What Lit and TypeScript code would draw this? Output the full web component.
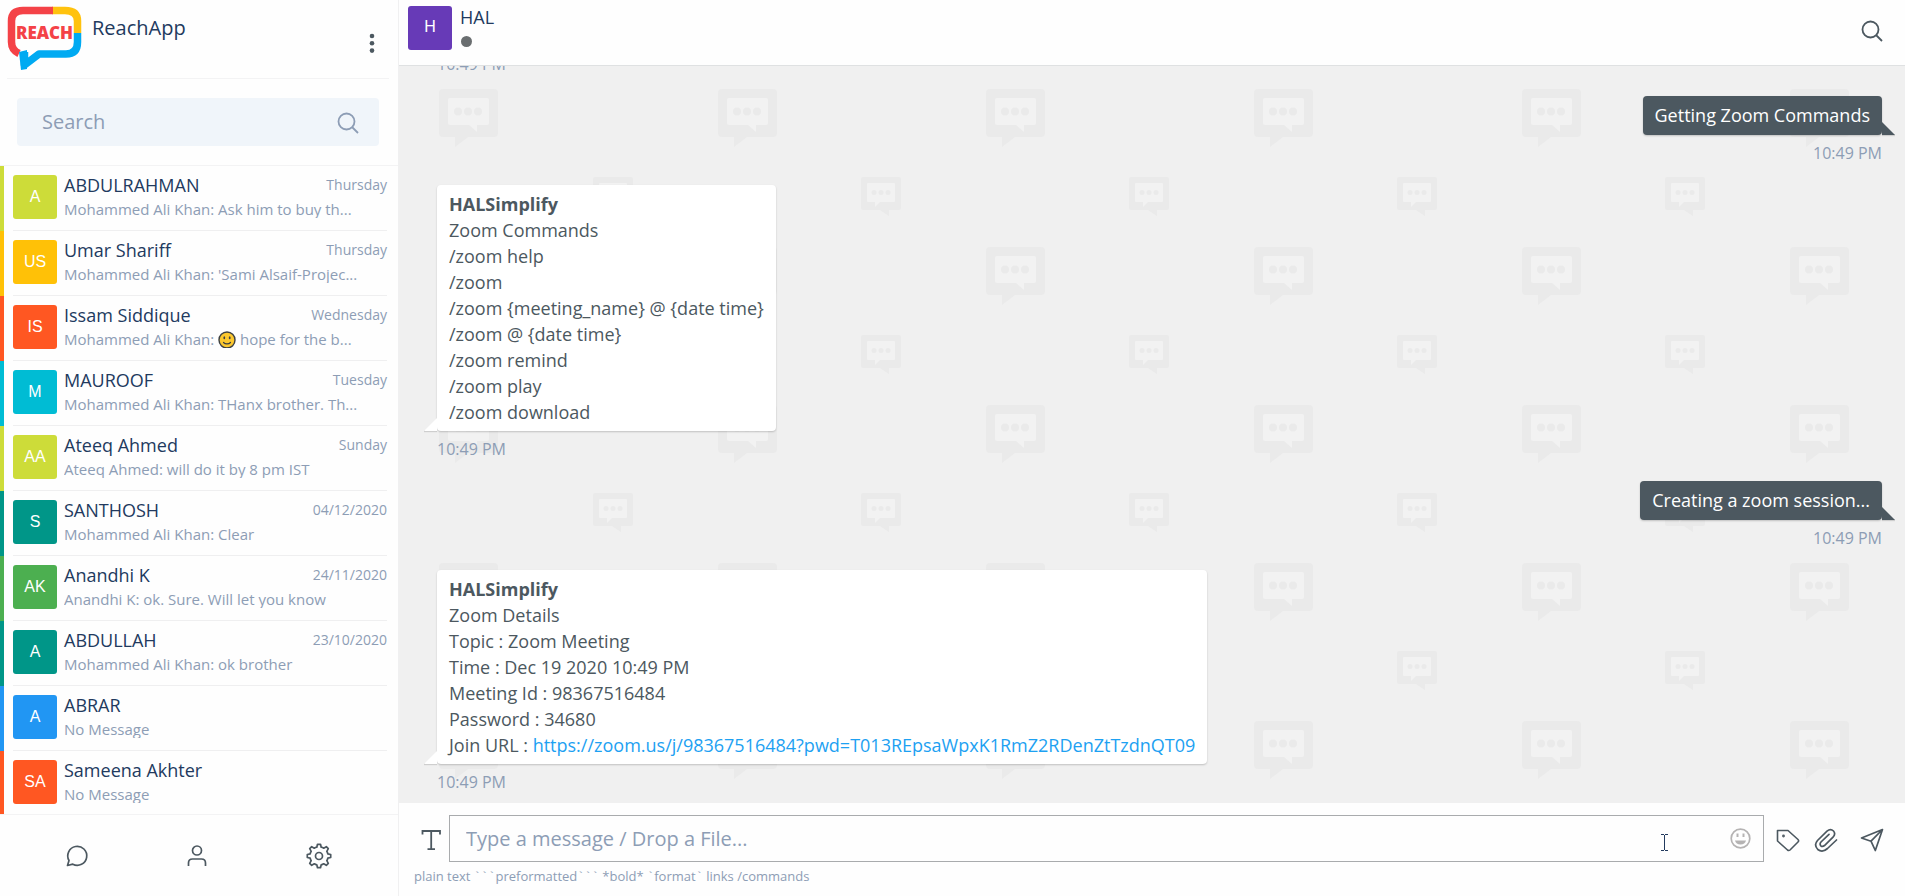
import { LitElement, html, css, svg, nothing, type TemplateResult } from "lit";
import { customElement, property } from "lit/decorators.js";
import { styleMap } from "lit/directives/style-map.js";

interface Chat {
  initials: string;
  name: string;
  when: string;
  color: string;
  text: string;
  emoji?: boolean;
  after?: string;
}

const CHATS: Chat[] = [
  { initials: "A", name: "ABDULRAHMAN", when: "Thursday", color: "#cddc39", text: "Mohammed Ali Khan: Ask him to buy th..." },
  { initials: "US", name: "Umar Shariff", when: "Thursday", color: "#ffc107", text: "Mohammed Ali Khan: 'Sami Alsaif-Projec..." },
  { initials: "IS", name: "Issam Siddique", when: "Wednesday", color: "#ff5722", text: "Mohammed Ali Khan: ", emoji: true, after: " hope for the b..." },
  { initials: "M", name: "MAUROOF", when: "Tuesday", color: "#00bcd4", text: "Mohammed Ali Khan: THanx brother. Th..." },
  { initials: "AA", name: "Ateeq Ahmed", when: "Sunday", color: "#cddc39", text: "Ateeq Ahmed: will do it by 8 pm IST" },
  { initials: "S", name: "SANTHOSH", when: "04/12/2020", color: "#009688", text: "Mohammed Ali Khan: Clear" },
  { initials: "AK", name: "Anandhi K", when: "24/11/2020", color: "#4caf50", text: "Anandhi K: ok. Sure. Will let you know" },
  { initials: "A", name: "ABDULLAH", when: "23/10/2020", color: "#009688", text: "Mohammed Ali Khan: ok brother" },
  { initials: "A", name: "ABRAR", when: "", color: "#2196f3", text: "No Message" },
  { initials: "SA", name: "Sameena Akhter", when: "", color: "#ff5722", text: "No Message" },
];

const smiley = html`<svg class="emoji" viewBox="0 0 18 18" role="img" aria-label="smile">
  <circle cx="9" cy="9" r="8" fill="#fcc82e" stroke="#3c4043" stroke-width="1.4" />
  <ellipse cx="6.3" cy="6.8" rx="0.9" ry="1.5" fill="#3c4043" />
  <ellipse cx="11.7" cy="6.8" rx="0.9" ry="1.5" fill="#3c4043" />
  <path d="M5.500 11.500c1.800 1.800 5.200 1.800 7 0" fill="none" stroke="#3c4043" stroke-width="1.2" stroke-linecap="round" />
</svg>`;

const searchIcon = html`<svg width="22" height="22" viewBox="0 0 22 22" fill="none" stroke="currentColor" stroke-width="1.8" aria-hidden="true">
  <circle cx="9.5" cy="9.5" r="8" />
  <path d="M15 15l6 6" />
</svg>`;

@customElement("chat-row")
class ChatRow extends LitElement {
  @property({ attribute: false }) chat!: Chat;

  static styles = css`
    :host { display: block; }
    .row {
      display: flex;
      align-items: flex-start;
      box-sizing: border-box;
      width: 100%;
      height: 65px;
      padding: 0 11px 0 9px;
      border: 0;
      border-left: 4px solid;
      background: none;
      font-family: "Open Sans", sans-serif;
      text-align: left;
    }
    .inner {
      display: flex;
      flex: 1;
      min-width: 0;
      height: 65px;
      gap: 7px;
      padding-top: 8px;
      box-sizing: border-box;
      border-bottom: 1px solid #efeff0;
    }
    .avatar {
      flex: none;
      width: 44px;
      height: 44px;
      margin-top: 1px;
      border-radius: 3px;
      color: #fff;
      font: 16px/44px "Liberation Sans", Arial, sans-serif;
      text-align: center;
    }
    .body { flex: 1; min-width: 0; }
    .top { display: flex; justify-content: space-between; align-items: center; height: 22px; }
    .name { font-size: 18px; line-height: 22px; font-weight: 500; color: #223a5e; }
    .when { font-size: 14px; line-height: 22px; color: #8d9db5; }
    .text {
      display: block;
      height: 20px;
      margin-top: 2px;
      overflow: hidden;
      font-size: 15px;
      line-height: 22px;
      color: #8d9db5;
      white-space: nowrap;
    }
    .emoji { width: 18px; height: 18px; vertical-align: -4px; }
  `;

  render() {
    const c = this.chat;
    return html`<button class="row" type="button" style=${styleMap({ borderLeftColor: c.color })}>
      <span class="inner">
        <span class="avatar" style=${styleMap({ background: c.color })}>${c.initials}</span>
        <span class="body">
          <span class="top">
            <span class="name">${c.name}</span>
            <span class="when">${c.when}</span>
          </span>
          <span class="text">${c.text}${c.emoji ? smiley : nothing}${c.after ?? nothing}</span>
        </span>
      </span>
    </button>`;
  }
}

@customElement("chat-message")
class ChatMessage extends LitElement {
  @property({ type: Boolean, reflect: true }) own = false;
  @property() time = "";

  static styles = css`
    :host {
      display: flex;
      flex-direction: column;
      align-items: flex-start;
      flex: none;
      font-size: 18px;
      line-height: 26px;
    }
    :host([own]) { align-items: flex-end; }
    .bubble {
      position: relative;
      padding: 6px 12px;
      border-radius: 4px;
      background: #fff;
      color: #4c5860;
      box-shadow: 0 1px 2px rgba(0, 0, 0, 0.2);
    }
    .bubble::after {
      content: "";
      position: absolute;
      bottom: 0;
      right: 100%;
      width: 13px;
      height: 13px;
      background: #fff;
      box-shadow: 0 1px 1px rgba(0, 0, 0, 0.14);
      clip-path: polygon(100% 0, 0 100%, 0 120%, 100% 120%);
    }
    :host([own]) .bubble { padding-bottom: 7px; background: #4c5860; color: #fff; }
    :host([own]) .bubble::after {
      right: auto;
      left: 100%;
      background: #4c5860;
      clip-path: polygon(0 0, 100% 100%, 100% 120%, 0 120%);
    }
    .time {
      padding-top: 7px;
      font-size: 16px;
      line-height: 22px;
      color: #8d9db5;
    }
  `;

  render() {
    return html`<div class="bubble"><slot></slot></div>
      <time class="time">${this.time}</time>`;
  }
}

@customElement("chat-wallpaper")
class ChatWallpaper extends LitElement {
  static styles = css`
    :host { display: block; overflow: hidden; }
    svg { display: block; }
  `;

  /* Large mark with its tail on the left. */
  private large(x: number, y: number) {
    return svg`<g transform="translate(${x} ${y})">
      <path fill="#eaeaea" d="M4 0H55Q59 0 59 4V44Q59 48 55 48H29L16 58V48H4Q0 48 0 44V4Q0 0 4 0Z" />
      <path fill="#f2f2f2" d="M11 9H48Q50 9 50 11V34Q50 36 48 36H38V43L30 36H11Q9 36 9 34V11Q9 9 11 9Z" />
      <g fill="#eaeaea"><circle cx="19" cy="22.5" r="4" /><circle cx="29" cy="22.5" r="4" /><circle cx="39" cy="22.5" r="4" /></g>
    </g>`;
  }

  /* Small mark, mirrored. */
  private small(x: number, y: number) {
    return svg`<g transform="translate(${x} ${y})">
      <path fill="#eaeaea" d="M2 0H38Q40 0 40 2V31Q40 33 38 33H28V39L19 33H2Q0 33 0 31V2Q0 0 2 0Z" />
      <path fill="#f2f2f2" d="M7 6H33Q34 6 34 7V24Q34 25 33 25H19L14 30V25H7Q6 25 6 24V7Q6 6 7 6Z" />
      <g fill="#eaeaea"><circle cx="13" cy="15.5" r="2.5" /><circle cx="20" cy="15.5" r="2.5" /><circle cx="27" cy="15.5" r="2.5" /></g>
    </g>`;
  }

  render() {
    const marks: TemplateResult[] = [];
    for (let row = 0; row < 6; row++) {
      const y = 23 + row * 158;
      marks.push(this.large(40, y) as unknown as TemplateResult);
      for (let col = 0; col < 8; col++) {
        marks.push(this.large(319 + col * 268, y) as unknown as TemplateResult);
        marks.push(this.small(194 + col * 268, y + 88) as unknown as TemplateResult);
      }
    }
    return html`<svg width="100%" height="100%" aria-hidden="true">${marks}</svg>`;
  }
}

@customElement("app-root")
class AppRoot extends LitElement {
  static styles = css`
    :host {
      display: flex;
      height: 100vh;
      overflow: hidden;
      background: #fefefe;
      color: #4c5860;
      font-family: "Open Sans", sans-serif;
    }
    button {
      display: flex;
      padding: 0;
      border: 0;
      background: none;
      color: #4c5860;
    }
    .side {
      display: flex;
      flex: none;
      flex-direction: column;
      width: 398px;
      border-right: 1px solid #f0f0f1;
    }
    .brand {
      display: flex;
      align-items: flex-start;
      height: 78px;
      margin: 0 9px 0 7px;
      border-bottom: 1px solid #f3f3f4;
    }
    .logo { flex: none; width: 76px; height: 68px; padding-top: 5px; }
    h1 { flex: 1; margin: 0; padding: 14px 0 0 9px; font-size: 20px; line-height: 28px; font-weight: 500; color: #223a5e; }
    .more { padding: 33px 14px 0 0; }
    .search {
      display: flex;
      align-items: center;
      height: 48px;
      margin: 19px 19px 19px 17px;
      padding: 0 20px 0 25px;
      border-radius: 4px;
      background: #f0f5fa;
      color: #8d9db5;
    }
    .search input {
      flex: 1;
      min-width: 0;
      padding: 0;
      border: 0;
      outline: 0;
      background: none;
      font: 20px/28px "Open Sans", sans-serif;
      color: #223a5e;
    }
    .search svg { margin-top: 2px; }
    input::placeholder { color: #8d9db5; opacity: 1; }
    .list { flex: 1; min-height: 0; overflow: hidden; border-top: 1px solid #f3f3f4; }
    .tabs {
      display: flex;
      align-items: center;
      justify-content: space-around;
      height: 81px;
      padding: 0 18px 0 17px;
      border-top: 1px solid #f3f3f4;
    }
    .tabs button { padding: 4px; }
    .main { display: flex; flex: 1; flex-direction: column; min-width: 0; }
    .head {
      display: flex;
      flex: none;
      height: 65px;
      box-sizing: border-box;
      padding: 6px 22px 0 9px;
      gap: 8px;
    }
    .avatar {
      width: 44px;
      height: 44px;
      border-radius: 3px;
      background: #673ab7;
      color: #fff;
      font: 16px/42px "Liberation Sans", Arial, sans-serif;
      text-align: center;
    }
    .who { flex: 1; }
    h2 { margin: 0; font-size: 18px; line-height: 22px; font-weight: 500; color: #223a5e; }
    .status { width: 11px; height: 11px; margin: 8px 0 0 1px; border-radius: 50%; background: #6a6e70; }
    .head button { align-self: flex-start; padding-top: 14px; }
    .chat {
      display: grid;
      flex: 1;
      min-height: 0;
      overflow: hidden;
      border-top: 1px solid #dfe1e2;
      background: #f0f0f0;
    }
    .chat > * { grid-area: 1 / 1; min-height: 0; }
    .log {
      display: flex;
      flex-direction: column;
      justify-content: flex-end;
      z-index: 1;
      gap: 21px;
      overflow: hidden;
      padding: 0 23px 10px 38px;
    }
    .log b { font-weight: 700; }
    .log a { color: #1da1f2; text-decoration: none; }
    .earlier { flex: none; font-size: 16px; line-height: 22px; color: #8d9db5; }
    .compose { flex: none; padding: 12px 21px 10px 15px; }
    .line { display: flex; align-items: center; }
    .field {
      display: flex;
      flex: 1;
      align-items: center;
      height: 45px;
      margin: 0 12px 0 8px;
      padding: 0 12px 0 16px;
      border: 1px solid #a9abad;
    }
    .field input {
      flex: 1;
      min-width: 0;
      padding: 0;
      border: 0;
      outline: 0;
      background: none;
      font: 20px/28px "Open Sans", sans-serif;
      color: #223a5e;
    }
    .caret { margin: 8px 62px 0 0; }
    .attach { margin: 0 22px 0 14px; }
    .line > button { padding-top: 3px; }
    .hint { margin: 4px 0 0; font-size: 13px; line-height: 20px; color: #8d9db5; }
    .tick { font: 12px/16px "Liberation Mono", monospace; }
  `;

  render() {
    return html`
      <aside class="side">
        <header class="brand">
          <svg class="logo" viewBox="0 0 76 68" role="img" aria-label="Reach">
            <g fill="none" stroke-width="7.5">
              <path stroke="#00aaf2" d="M70.5 28V37Q70.500 49 59 49H32L17.500 60V47" stroke-linejoin="round" />
              <path stroke="#ffc20e" d="M45 5.500H58Q70.500 5.500 70.500 16V28" />
              <path stroke="#f44247" d="M46 5.500H16Q4.500 5.500 4.500 16V37Q4.500 45 12 48.500" />
            </g>
            <path fill="#00aaf2" d="M12 47L20 45V64L14 65Z" />
            <text x="37.500" y="34" text-anchor="middle" font-family="Open Sans" font-weight="800" font-size="17" fill="#f44247">REACH</text>
          </svg>
          <h1>ReachApp</h1>
          <button class="more" type="button" aria-label="Menu">
            <svg width="6" height="20" viewBox="0 0 6 20" fill="currentColor">
              <circle cx="3" cy="3" r="2.300" /><circle cx="3" cy="10.300" r="2.300" /><circle cx="3" cy="17.600" r="2.300" />
            </svg>
          </button>
        </header>
        <label class="search">
          <input type="search" placeholder="Search" aria-label="Search" />
          ${searchIcon}
        </label>
        <nav class="list">${CHATS.map((c) => html`<chat-row .chat=${c}></chat-row>`)}</nav>
        <nav class="tabs">
          <button type="button" aria-label="Chats">
            <svg width="24" height="24" viewBox="0 0 24 24" fill="none" stroke="currentColor" stroke-width="1.700" stroke-linejoin="round">
              <path d="M2.500 21.500L4 16.500A9.500 9.500 0 1 1 7.800 20.200Z" />
            </svg>
          </button>
          <button type="button" aria-label="Contacts">
            <svg width="24" height="24" viewBox="0 0 24 24" fill="none" stroke="currentColor" stroke-width="1.700">
              <circle cx="12" cy="6.500" r="4.500" />
              <path d="M3.500 22V19Q3.500 15 7.500 15H16.500Q20.500 15 20.500 19V22" />
            </svg>
          </button>
          <button type="button" aria-label="Settings">
            <svg width="26" height="26" viewBox="0 0 26 26" fill="none" stroke="currentColor" stroke-width="1.700" stroke-linejoin="round">
              <circle cx="13" cy="13" r="3.500" />
              <path d="M10.800 4.200L11.500 1.300H14.500L15.200 4.200A9 9 0 0 1 17.700 5.200L20.300 3.700L22.300 5.700L20.800 8.300A9 9 0 0 1 21.800 10.800L24.700 11.500V14.500L21.800 15.200A9 9 0 0 1 20.800 17.700L22.300 20.300L20.300 22.300L17.700 20.800A9 9 0 0 1 15.200 21.800L14.500 24.700H11.500L10.800 21.800A9 9 0 0 1 8.300 20.800L5.700 22.300L3.700 20.300L5.200 17.700A9 9 0 0 1 4.200 15.200L1.300 14.500V11.500L4.200 10.800A9 9 0 0 1 5.200 8.300L3.700 5.700L5.700 3.700L8.300 5.200A9 9 0 0 1 10.800 4.200Z" />
            </svg>
          </button>
        </nav>
      </aside>
      <main class="main">
        <header class="head">
          <div class="avatar">H</div>
          <div class="who">
            <h2>HAL</h2>
            <div class="status"></div>
          </div>
          <button type="button" aria-label="Search messages">${searchIcon}</button>
        </header>
        <section class="chat">
          <chat-wallpaper></chat-wallpaper>
          <div class="log">
            <time class="earlier">10:49 PM</time>
            <chat-message own time="10:49 PM">Getting Zoom Commands</chat-message>
            <chat-message time="10:49 PM">
              <b>HALSimplify</b>
              <div>Zoom Commands</div>
              <div>/zoom help</div>
              <div>/zoom</div>
              <div>/zoom {meeting_name} @ {date time}</div>
              <div>/zoom @ {date time}</div>
              <div>/zoom remind</div>
              <div>/zoom play</div>
              <div>/zoom download</div>
            </chat-message>
            <chat-message own time="10:49 PM">Creating a zoom session...</chat-message>
            <chat-message time="10:49 PM">
              <b>HALSimplify</b>
              <div>Zoom Details</div>
              <div>Topic : Zoom Meeting</div>
              <div>Time : Dec 19 2020 10:49 PM</div>
              <div>Meeting Id : 98367516484</div>
              <div>Password : 34680</div>
              <div>
                Join URL :
                <a href="https://zoom.us/j/98367516484?pwd=T013REpsaWpxK1RmZ2RDenZtTzdnQT09">https://zoom.us/j/98367516484?pwd=T013REpsaWpxK1RmZ2RDenZtTzdnQT09</a>
              </div>
            </chat-message>
          </div>
        </section>
        <footer class="compose">
          <div class="line">
            <button type="button" aria-label="Text format">
              <svg width="27" height="24" viewBox="0 0 27 24" fill="none" stroke="currentColor" stroke-width="1.800">
                <path d="M8.500 6.500V3H26V6.500M17.200 3V21M13.500 21.200H21" />
              </svg>
            </button>
            <div class="field">
              <input type="text" placeholder="Type a message / Drop a File..." aria-label="Message" />
              <svg class="caret" width="7" height="17" viewBox="0 0 7 17" fill="none" stroke="#223a5e" aria-hidden="true">
                <path d="M0 .5H3M4 .5H7M3.500 1V16M0 16.500H3M4 16.500H7" />
              </svg>
              <button type="button" aria-label="Emoji">
                <svg width="21" height="21" viewBox="0 0 21 21" fill="none" stroke="#b5b3b3" stroke-width="1.700">
                  <circle cx="10.500" cy="10.500" r="9.300" />
                  <path fill="#b5b3b3" stroke="none" d="M5 12.500H16Q15 16.500 10.500 16.500T5 12.500Z" />
                  <path d="M7.500 5.500V9M13.500 5.500V9" stroke-width="2" />
                </svg>
              </button>
            </div>
            <button type="button" aria-label="Tag">
              <svg width="24" height="24" viewBox="0 0 24 24" fill="none" stroke="currentColor" stroke-width="1.600" stroke-linejoin="round">
                <path d="M1.500 2.500H12L22 11.500Q23.200 12.800 22 14L14 22Q12.800 23 11.500 22L1.500 13Z" />
                <circle cx="7.500" cy="8" r=".6" />
              </svg>
            </button>
            <button class="attach" type="button" aria-label="Attach file">
              <svg width="24" height="24" viewBox="0 0 24 24" fill="none" stroke="currentColor" stroke-width="1.700" stroke-linecap="round">
                <path d="M22.500 12L13.500 20.500Q8.500 25 3.800 21.500Q-.5 17 3.500 12.500L13 3.200Q16.500 .200 19.500 3Q22 6 19 9.200L10.500 17.500Q8.500 19.200 6.800 17.800Q5.300 16 7 14L15 6.300" />
              </svg>
            </button>
            <button type="button" aria-label="Send">
              <svg width="24" height="24" viewBox="0 0 24 24" fill="none" stroke="currentColor" stroke-width="1.700" stroke-linejoin="round">
                <path d="M22.500 1.500L1.500 10L11 13.200L15.300 22.500ZM22 2L11 13.200" />
              </svg>
            </button>
          </div>
          <p class="hint">plain text <span class="tick">\`\`\`</span>preformatted<span class="tick">\`\`\`</span> *bold* <span class="tick">\`</span>format<span class="tick">\`</span> links /commands</p>
        </footer>
      </main>
    `;
  }
}
